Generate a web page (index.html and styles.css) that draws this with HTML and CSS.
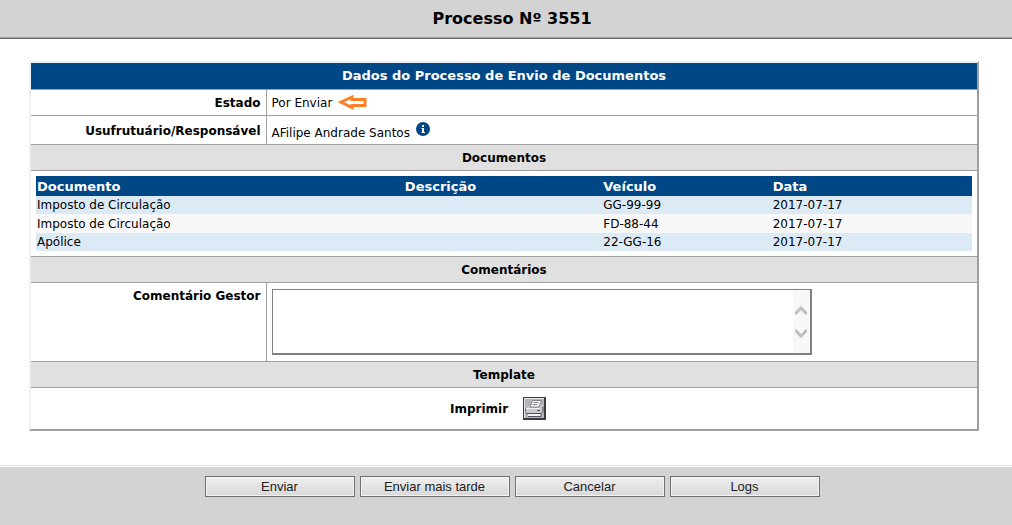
FILE: index.html
```html
<!DOCTYPE html>
<html lang="pt">
<head>
    <meta charset="UTF-8">
    <meta name="viewport" content="width=device-width, initial-scale=1.0">
    <title>Processo Nº 3551</title>
    <link rel="stylesheet" href="styles.css">
</head>
<body>
    <header class="page-header">
        <h1>Processo Nº 3551</h1>
    </header>

    <form class="process-form">
        <main class="panel">
            <h2 class="panel-title">Dados do Processo de Envio de Documentos</h2>
            <div class="field">
                <div class="field-label">Estado</div>
                <div class="field-value">
                    <span>Por Enviar</span>
                    <svg class="arrow" width="29" height="16" viewBox="0 0 29 16" aria-hidden="true">
                        <path d="M3 8 L14 3 V5.500 H27 V11.500 H14 V13.500 Z" fill="#fff" stroke="#ff7f27" stroke-width="3"/>
                    </svg>
                </div>
            </div>
            <div class="field field-user">
                <div class="field-label">Usufrutuário/Responsável</div>
                <div class="field-value">
                    <span>AFilipe Andrade Santos</span>
                    <svg class="info" width="14" height="14" viewBox="0 0 14 14" role="img" aria-label="Informação">
                        <circle cx="7" cy="7" r="7" fill="#004785"/>
                        <path d="M6 3h2v2H6z M5.500 6h2.500v4h1v1H5.500v-1H6V7H5.500z" fill="#fff"/>
                    </svg>
                </div>
            </div>

            <h3 class="section-title">Documentos</h3>
            <div class="documents">
                <table>
                    <thead>
                        <tr>
                            <th class="col-doc">Documento</th>
                            <th class="col-desc">Descrição</th>
                            <th class="col-vehicle">Veículo</th>
                            <th class="col-date">Data</th>
                        </tr>
                    </thead>
                    <tbody>
                        <tr><td>Imposto de Circulação</td><td></td><td>GG-99-99</td><td>2017-07-17</td></tr>
                        <tr><td>Imposto de Circulação</td><td></td><td>FD-88-44</td><td>2017-07-17</td></tr>
                        <tr><td>Apólice</td><td></td><td>22-GG-16</td><td>2017-07-17</td></tr>
                    </tbody>
                </table>
            </div>

            <h3 class="section-title">Comentários</h3>
            <div class="field field-comment">
                <label class="field-label" for="comment">Comentário Gestor</label>
                <div class="field-value">
                    <div class="comment-box">
                        <textarea id="comment" name="comment"></textarea>
                        <div class="scroll-track" aria-hidden="true">
                            <svg width="12" height="9" viewBox="0 0 12 9"><path d="M0 8 L6 2 L12 8" fill="none" stroke="#bfbfbf" stroke-width="3"/></svg>
                            <svg width="12" height="9" viewBox="0 0 12 9"><path d="M0 1 L6 7 L12 1" fill="none" stroke="#bfbfbf" stroke-width="3"/></svg>
                        </div>
                    </div>
                </div>
            </div>

            <h3 class="section-title">Template</h3>
            <div class="print-row">
                <label for="print">Imprimir</label>
                <button type="button" id="print" class="print-button">
                    <svg width="23" height="23" viewBox="0 0 23 23" aria-hidden="true">
                        <path d="M0 0h23v23H0z" fill="#3a3a42"/>
                        <path d="M1 1h20v20H1z" fill="#e4e4e8"/>
                        <path d="M2 2h19v19H2z" fill="#b4b4ba"/>
                        <path d="M9.500 3.500h9L16 10H7z" fill="#f6f6f8" stroke="#85858d"/>
                        <path d="M10.500 5.500h5M9.500 7.500h5" stroke="#85858d"/>
                        <path d="M3 11l3-2h1l-1 2h10l2-3h2v7l-2 2H3z" fill="#c8c8ce"/>
                        <path d="M3 11.500h14" stroke="#f4f4f6"/>
                        <path d="M3 16.500h15l2-2v-5" fill="none" stroke="#50505a"/>
                        <path d="M2.500 11v5" stroke="#77777f"/>
                        <path d="M14 13.500h3" stroke="#50505a"/>
                        <path d="M5 17h13v2H5z" fill="#f4f4f6"/>
                        <path d="M5 19.500h13v-3" fill="none" stroke="#50505a"/>
                    </svg>
                </button>
            </div>
        </main>

        <footer class="actions">
            <button type="button">Enviar</button>
            <button type="button">Enviar mais tarde</button>
            <button type="button">Cancelar</button>
            <button type="button">Logs</button>
        </footer>
    </form>
</body>
</html>
```
FILE: styles.css
```css
* {
    box-sizing: border-box;
}
body {
    display: flex;
    flex-direction: column;
    min-height: 100vh;
    margin: 0;
    background: #fff;
    color: #000;
    font-family: Verdana, "DejaVu Sans", sans-serif;
    font-size: 12px;
    line-height: 18px;
}
h1, h2, h3 {
    margin: 0;
    text-align: center;
}
.page-header {
    padding: 8px 0 9px 12px;
    background: #d3d3d3;
    border-bottom: 1px solid #696969;
    box-shadow: inset 0 -1px #a0a0a0;
}
h1 {
    font-size: 16px;
    line-height: 21px;
}
.process-form {
    display: flex;
    flex-direction: column;
    flex: 1;
}
.panel {
    margin: 22px 33px 34px 29px;
    border: 2px solid #a0a0a0;
    border-top-color: #f0f0f0;
    border-left-color: #f0f0f0;
}
.panel-title {
    padding: 4px 0;
    background: #004785;
    color: #fff;
    font-size: 13px;
}
.field {
    display: flex;
    border-top: 1px solid #a0a0a0;
}
.field-label {
    flex: 0 0 calc(25% - 1px);
    padding: 4px 5px 3px;
    border-right: 1px solid #a0a0a0;
    font-weight: bold;
    text-align: right;
}
.field-value {
    display: flex;
    flex: 1;
    gap: 6px;
    padding: 4px 5px 3px;
}
.field-user .field-label {
    padding: 6px 5px 4px;
}
.field-user .field-value {
    padding: 8px 5px 2px;
}
.info {
    margin-top: -2px;
}
.section-title {
    padding: 4px 0 3px;
    background: #e0e0e0;
    border-top: 1px solid #a0a0a0;
    font-size: 12px;
}
.documents {
    padding: 5px;
    border-top: 1px solid #a0a0a0;
}
.documents table {
    width: 100%;
    border-collapse: collapse;
    table-layout: fixed;
}
.documents th {
    height: 20px;
    padding: 1px 1px 0;
    background: #004785;
    color: #fff;
    font-size: 13px;
    text-align: left;
}
.documents td {
    padding: 0 1px;
}
.documents tbody tr {
    height: 18px;
    background: #f8f8f8;
}
.documents tbody tr:nth-child(odd) {
    background: #dceaf5;
}
.documents tbody tr:nth-child(even) {
    height: 19px;
}
/* shares of the table width */
.col-doc {
    width: 39.3%;
}
.col-desc {
    width: 21.2%;
}
.col-vehicle {
    width: 18.1%;
}
.col-date {
    width: 21.4%;
}
.field-comment .field-value {
    padding: 6px 5px;
}
.comment-box {
    position: relative;
    width: 540px;
    max-width: 100%;
    height: 66px;
}
.comment-box textarea {
    display: block;
    width: 100%;
    height: 100%;
    padding: 2px 20px 2px 2px;
    border: 2px solid #808080;
    border-width: 1px 2px 2px 1px;
    background: #fff;
    font: inherit;
    resize: none;
}
.scroll-track {
    position: absolute;
    top: 1px;
    right: 2px;
    bottom: 2px;
    display: flex;
    flex-direction: column;
    align-items: center;
    justify-content: center;
    gap: 14px;
    width: 17px;
    background: #f8f8f8;
}
.print-row {
    display: flex;
    align-items: center;
    justify-content: center;
    gap: 15px;
    padding: 9px 12px 9px 0;
    border-top: 1px solid #a0a0a0;
    font-weight: bold;
}
.print-button {
    padding: 0;
    border: 0;
    background: none;
    line-height: 0;
    cursor: pointer;
}
.actions {
    display: flex;
    flex: 1;
    align-items: flex-start;
    justify-content: center;
    gap: 5px;
    padding: 10px 0 28px 12px;
    background: #d3d3d3;
    border-top: 1px solid #e0e0e0;
    box-shadow: inset 0 1px #fff;
}
.actions button {
    width: 150px;
    height: 21px;
    padding: 0;
    border: 1px solid #707070;
    background: linear-gradient(#efefef, #d8d8d8);
    box-shadow: inset 0 0 0 1px #f3f3f3;
    color: #222;
    font: 13px "Liberation Sans", Arial, sans-serif;
    cursor: pointer;
}
```
